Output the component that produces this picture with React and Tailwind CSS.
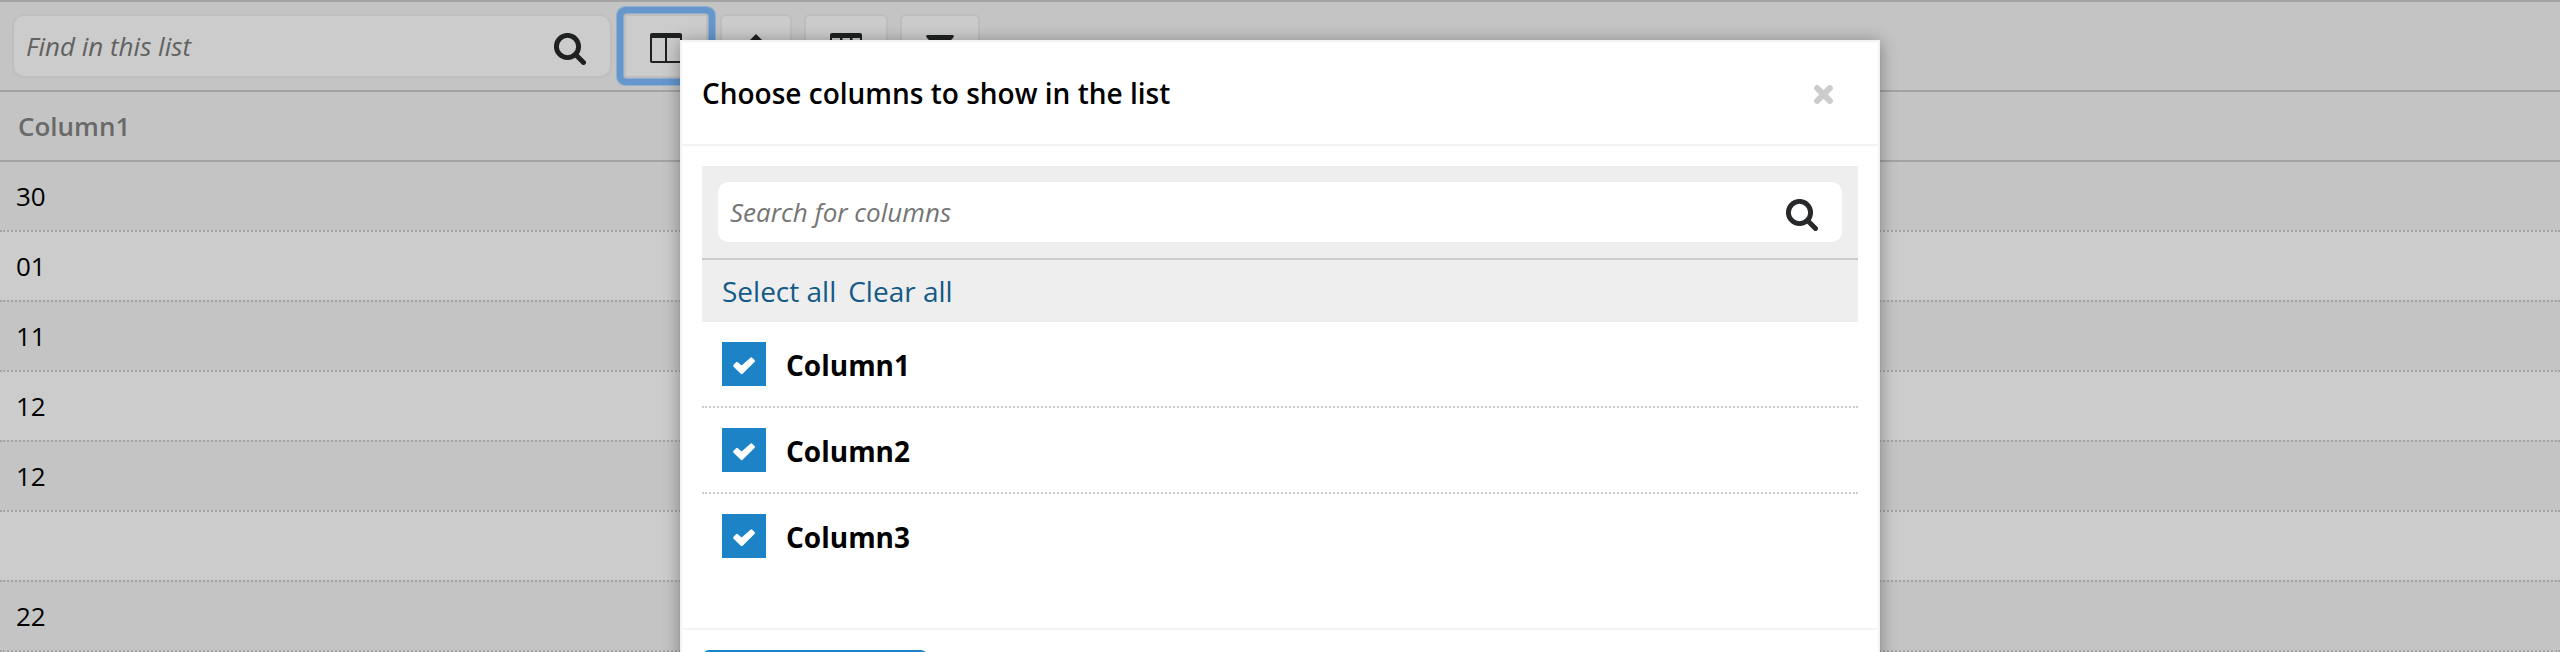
const rows = ["30", "01", "11", "12", "12", "", "22"];
const columns = ["Column1", "Column2", "Column3"];

function SearchIcon({ className }) {
  return (
    <svg viewBox="0 0 32 32" fill="none" stroke="currentColor" strokeLinecap="round" className={"h-8 w-8 " + className}>
      <circle cx="13.5" cy="13.5" r="11.1" strokeWidth="4.9" />
      <path d="M22.5 22.5 L29.5 29.5" strokeWidth="5" />
    </svg>
  );
}

function CheckIcon() {
  return (
    <svg viewBox="0 0 22 18" fill="white" stroke="white" strokeWidth="2.6" strokeLinejoin="round" className="mt-[3px] h-[18px] w-[22px]">
      <path d="M1.5 8.7 L4 6.2 L8.6 10.2 L18.3 1.6 L20.6 4 L8.7 15.8 Z" />
    </svg>
  );
}

function ToolButton({ className, children }) {
  return (
    <button className={"flex h-16 shrink-0 items-start justify-center border-2 border-[#bebebe] bg-[#cccccc] text-[#1f2121] " + className}>
      {children}
    </button>
  );
}

function Toolbar() {
  return (
    <div className="flex h-[92px] items-start border-y-2 border-[#a3a3a3] pt-3 pl-3">
      <div className="flex h-16 w-[600px] items-center justify-between rounded-xl border-2 border-[#bfbfbf] bg-[#cccccc] pr-[24px] pl-3">
        <span className="text-[26px] leading-9 text-[#616161] italic">Find in this list</span>
        <SearchIcon className="mt-1.5 text-[#1f2121]" />
      </div>
      <ToolButton className="ml-3 w-[84px] rounded-[3px] shadow-[0_0_0_1px_#8fabce,0_0_0_7px_#6596cc,0_0_0_8px_#93afd0] outline-none">
        <svg viewBox="0 0 32 30" className="mt-[17px] h-[30px] w-8" fill="currentColor">
          <path fillRule="evenodd" d="M2 0H30Q32 0 32 2V28Q32 30 30 30H2Q0 30 0 28V2Q0 0 2 0ZM2 5V28H15V5ZM17 5V28H30V5Z" />
        </svg>
      </ToolButton>
      <ToolButton className="ml-3 w-[72px] rounded-md">
        <svg viewBox="0 0 32 32" className="mt-[18px] h-8 w-8" fill="currentColor">
          <path d="M16 0 24 8H19V24H13V8H8Z" />
        </svg>
      </ToolButton>
      <ToolButton className="ml-3 w-[84px] rounded-md">
        <svg viewBox="0 0 32 30" className="mt-[17px] h-[30px] w-8" fill="currentColor">
          <path fillRule="evenodd" d="M2 0H30Q32 0 32 2V28Q32 30 30 30H2Q0 30 0 28V2Q0 0 2 0ZM2 5V28H10V5ZM12.500 5V28H20V5ZM22.500 5V28H30V5Z" />
        </svg>
      </ToolButton>
      <ToolButton className="ml-3 w-[80px] rounded-md">
        <svg viewBox="0 0 28 28" className="mt-[19px] h-7 w-7" fill="currentColor">
          <path d="M1 0H27Q28.500 1 27 3L17 13V26L11 21V13L1 3Q-.5 1 1 0Z" />
        </svg>
      </ToolButton>
    </div>
  );
}

function Dialog() {
  return (
    <div className="absolute top-10 left-[680px] h-[700px] w-[1200px] border-2 border-[#f4f4f4] bg-white shadow-[0_2px_16px_rgba(0,0,0,0.36)]">
      <div className="flex h-[104px] items-center justify-between border-b-2 border-[#f4f4f4] pr-[45px] pl-5">
        <h2 className="text-[28px] leading-10 font-semibold text-black">Choose columns to show in the list</h2>
        <svg viewBox="0 0 19 19" className="mt-[3px] h-[19px] w-[19px]" fill="none" stroke="#cccccc" strokeWidth="6.1" strokeLinecap="round">
          <path d="M3.2 3.2 L15.8 15.8 M15.8 3.2 L3.2 15.8" />
        </svg>
      </div>
      <div className="h-[484px] border-b-2 border-[#f4f4f4] px-5 pt-5">
        <div className="bg-[#eeeeee]">
          <div className="border-b-2 border-[#cccccc] p-4">
            <div className="flex h-[60px] items-center justify-between rounded-[10px] bg-white pr-6 pl-3">
              <span className="text-[26px] leading-9 text-[#757575] italic">Search for columns</span>
              <SearchIcon className="mt-1.5 text-[#27292a]" />
            </div>
          </div>
          <div className="flex h-[62px] items-center gap-3 pl-5 text-[28px] text-[#135a87]">
            <span>Select all</span>
            <span>Clear all</span>
          </div>
        </div>
        {columns.map((name) => (
          <div key={name} className="flex h-[86px] items-center gap-5 border-b-2 border-dotted border-[#cccccc] pl-5 last:border-b-0 last:pb-0.5">
            <span className="flex h-11 w-11 items-center justify-center bg-[#1c83c6]">
              <CheckIcon />
            </span>
            <span className="pt-0.5 text-[28px] leading-10 font-bold text-black">{name}</span>
          </div>
        ))}
      </div>
      <div className="px-[21px] pt-5">
        <div className="h-16 w-[224px] rounded-md bg-[#1c83c6]" />
      </div>
    </div>
  );
}

export default function App() {
  return (
    <main className="relative h-[652px] w-full overflow-hidden bg-[#c4c4c4] font-['Open_Sans','Noto_Sans',sans-serif]">
      <Toolbar />
      <div className="flex h-[68px] items-center pl-[18px] text-[26px] font-semibold text-[#696969]">Column1</div>
      {rows.map((value, i) => (
        <div
          key={i}
          className={
            "flex h-[70px] items-center border-t-2 border-[#a3a3a3] pl-4 text-[26px] text-black " +
            (i === 0 ? "border-solid " : "border-dotted ") +
            (i % 2 ? "bg-[#cccccc]" : "bg-[#c4c4c4]")
          }
        >
          {value}
        </div>
      ))}
      <div className="h-[70px] border-t-2 border-dotted border-[#a3a3a3] bg-[#cccccc]" />
      <Dialog />
    </main>
  );
}
